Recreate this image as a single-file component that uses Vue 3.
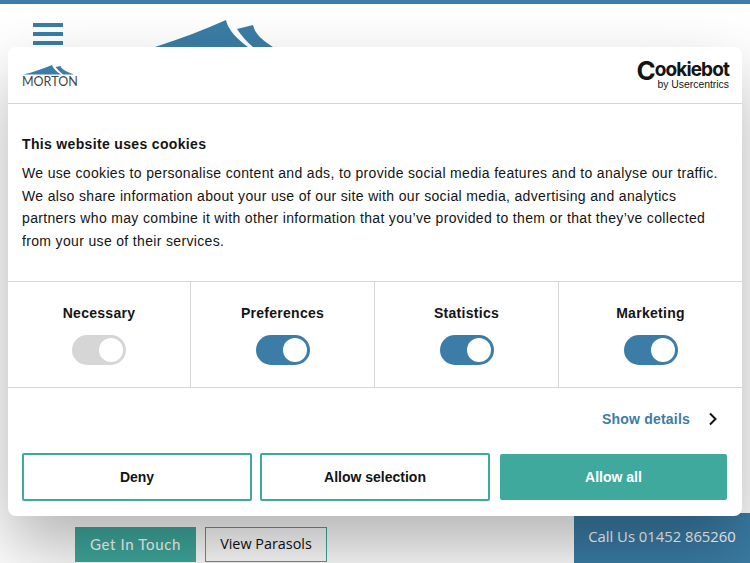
<template>
  <div class="page">
    <header class="site-header">
      <div class="burger">
        <span></span>
        <span></span>
        <span></span>
      </div>
      <svg class="site-logo" width="130" height="60" viewBox="0 0 130 60">
        <path d="M1 28 C26 20 50 11 72 1 C74 11 83 20 94 28 L94 60 L1 60 Z" fill="#3b7da6" />
        <path d="M83 10 L99 6 C101 15 108 21 119 28 L99 28 C93 23 87 16 83 10 Z" fill="#3b7da6" />
      </svg>
    </header>

    <div class="site-cta">
      <div class="cta-buttons">
        <a class="cta cta--solid">Get In Touch</a>
        <a class="cta cta--outline">View Parasols</a>
      </div>
      <div class="call-us">Call Us 01452 865260</div>
    </div>

    <section class="dialog">
      <div class="dialog__brand">
        <div class="morton">
          <svg width="54" height="12" viewBox="0 0 54 12">
            <path d="M1 10.5 C11 8.5 21 4.5 30 1 C31 4 35 8 39 10.5 Z" fill="#3b7da6" />
            <path d="M33.5 3 L38.5 2 C39 5 45 8 52 10.5 L41 10.5 C38 8 35.5 5.5 33.5 3 Z" fill="#3b7da6" />
          </svg>
          <span>MORTON</span>
        </div>
        <div class="cookiebot">
          <div class="cookiebot__name"><span class="cookiebot__c">C</span>ookiebot</div>
          <div class="cookiebot__by">by Usercentrics</div>
        </div>
      </div>

      <div class="dialog__body">
        <h2>This website uses cookies</h2>
        <p>We use cookies to personalise content and ads, to provide social media features and to analyse our traffic. We also share information about your use of our site with our social media, advertising and analytics partners who may combine it with other information that you’ve provided to them or that they’ve collected from your use of their services.</p>
      </div>

      <div class="consent">
        <div v-for="item in consentItems" :key="item.label" class="consent__item">
          <strong>{{ item.label }}</strong>
          <span class="toggle" :class="{ 'toggle--locked': item.locked }"><i></i></span>
        </div>
      </div>

      <div class="details">
        <span>Show details</span>
        <svg width="10" height="14" viewBox="0 0 10 14">
          <path d="M2 1.5 L7.5 7 L2 12.5" fill="none" stroke="#141414" stroke-width="2" />
        </svg>
      </div>

      <div class="actions">
        <button type="button" class="action">Deny</button>
        <button type="button" class="action">Allow selection</button>
        <button type="button" class="action action--primary">Allow all</button>
      </div>
    </section>
  </div>
</template>

<script setup>
  const consentItems = [
    { label: 'Necessary', locked: true },
    { label: 'Preferences', locked: false },
    { label: 'Statistics', locked: false },
    { label: 'Marketing', locked: false }
  ]
</script>

<style>
  html,
  body {
    margin: 0;
    background: #fff;
    overflow: hidden;
  }
</style>

<style scoped>
  .page {
    position: relative;
    display: flex;
    flex-direction: column;
    justify-content: space-between;
    width: 750px;
    height: 563px;
    box-sizing: border-box;
    border-top: 4px solid #3b7da6;
    overflow: hidden;
    font-family: "Liberation Sans", Arial, sans-serif;
  }

  .site-header {
    display: flex;
    gap: 91px;
    padding: 15px 0 0 33px;
    height: 60px;
    overflow: hidden;
  }

  .burger {
    display: flex;
    flex-direction: column;
    gap: 5px;
    width: 30px;
    margin-top: 4px;
  }

  .burger span {
    height: 4px;
    background: #3b7da6;
  }

  .site-cta {
    display: flex;
    justify-content: space-between;
    align-items: flex-end;
  }

  .cta-buttons {
    display: flex;
    gap: 9px;
    padding: 0 0 1px 75px;
  }

  .cta {
    display: flex;
    align-items: center;
    justify-content: center;
    box-sizing: border-box;
    width: 121px;
    height: 35px;
    padding-bottom: 2px;
    font-size: 15px;
  }

  .cta--solid {
    background: #3fa99d;
    color: #fff;
    font-family: Lato, sans-serif;
    letter-spacing: 0.65px;
  }

  .cta--outline {
    width: 122px;
    background: #fff;
    border: 1px solid #3fa99d;
    color: #111;
    font-family: "Open Sans", sans-serif;
    font-size: 14.4px;
  }

  .call-us {
    display: flex;
    align-items: center;
    justify-content: center;
    box-sizing: border-box;
    width: 176px;
    height: 50px;
    padding-bottom: 4px;
    background: #3b7da6;
    color: #fff;
    font-family: "Open Sans", sans-serif;
    font-size: 14.8px;
  }

  .dialog {
    position: absolute;
    top: 43px;
    left: 8px;
    width: 734px;
    height: 469px;
    display: flex;
    flex-direction: column;
    background: #fff;
    border-radius: 8px;
    box-shadow: 0 32px 68px rgba(0, 0, 0, 0.3);
    color: #141414;
  }

  .dialog__brand {
    display: flex;
    align-items: center;
    justify-content: space-between;
    box-sizing: border-box;
    height: 57px;
    padding: 0 13px 0 14px;
    border-bottom: 1px solid #d6d6d6;
  }

  .morton {
    display: flex;
    flex-direction: column;
    width: 56px;
    color: #444;
    font-family: Lato, sans-serif;
    font-size: 12.5px;
    line-height: 11px;
  }

  .morton svg {
    display: block;
  }

  .cookiebot {
    display: flex;
    flex-direction: column;
    align-items: flex-end;
    color: #141414;
  }

  .cookiebot__name {
    font-family: Inter, sans-serif;
    font-size: 19px;
    font-weight: 700;
    line-height: 20px;
    letter-spacing: -0.9px;
  }

  .cookiebot__c {
    font-size: 26px;
    line-height: 10px;
    vertical-align: -4px;
  }

  .cookiebot__by {
    font-size: 10.4px;
    line-height: 10px;
  }

  .dialog__body {
    box-sizing: border-box;
    height: 178px;
    padding: 32px 14px 0;
    border-bottom: 1px solid #d6d6d6;
  }

  .dialog__body h2 {
    margin: 0 0 10px;
    font-size: 14px;
    font-weight: 700;
    line-height: 16px;
    letter-spacing: 0.34px;
  }

  .dialog__body p {
    margin: 0;
    font-size: 14px;
    line-height: 22.5px;
    letter-spacing: 0.34px;
  }

  .consent {
    display: grid;
    grid-template-columns: 182px repeat(3, 184px);
    box-sizing: border-box;
    height: 106px;
    border-bottom: 1px solid #d6d6d6;
  }

  .consent__item {
    display: flex;
    flex-direction: column;
    align-items: center;
    gap: 14px;
    padding-top: 23px;
    border-left: 1px solid #d6d6d6;
  }

  .consent__item:first-child {
    border-left: 0;
  }

  .consent__item strong {
    font-size: 14px;
    line-height: 16px;
    letter-spacing: 0.28px;
  }

  .toggle {
    display: flex;
    justify-content: flex-end;
    align-items: center;
    box-sizing: border-box;
    width: 54px;
    height: 30px;
    padding: 3px;
    border-radius: 15px;
    background: #3b7da6;
  }

  .toggle i {
    display: block;
    width: 24px;
    height: 24px;
    border-radius: 50%;
    background: #fff;
  }

  .toggle--locked {
    background: #d6d6d6;
  }

  .details {
    display: flex;
    align-items: center;
    justify-content: flex-end;
    gap: 18px;
    box-sizing: border-box;
    height: 65px;
    padding: 0 24px 3px 0;
    color: #3b7da6;
    font-size: 14px;
    font-weight: 700;
    letter-spacing: 0.2px;
  }

  .actions {
    display: grid;
    grid-template-columns: repeat(3, 1fr);
    gap: 8px;
    padding: 0 14px;
  }

  .action {
    height: 48px;
    border: 2px solid #3fa99d;
    border-radius: 2px;
    background: #fff;
    color: #141414;
    font-family: inherit;
    font-size: 14px;
    font-weight: 700;
  }

  .action--primary {
    height: 46px;
    margin: 1px 1px 1px 2px;
    background: #3fa99d;
    color: #fff;
  }
</style>
